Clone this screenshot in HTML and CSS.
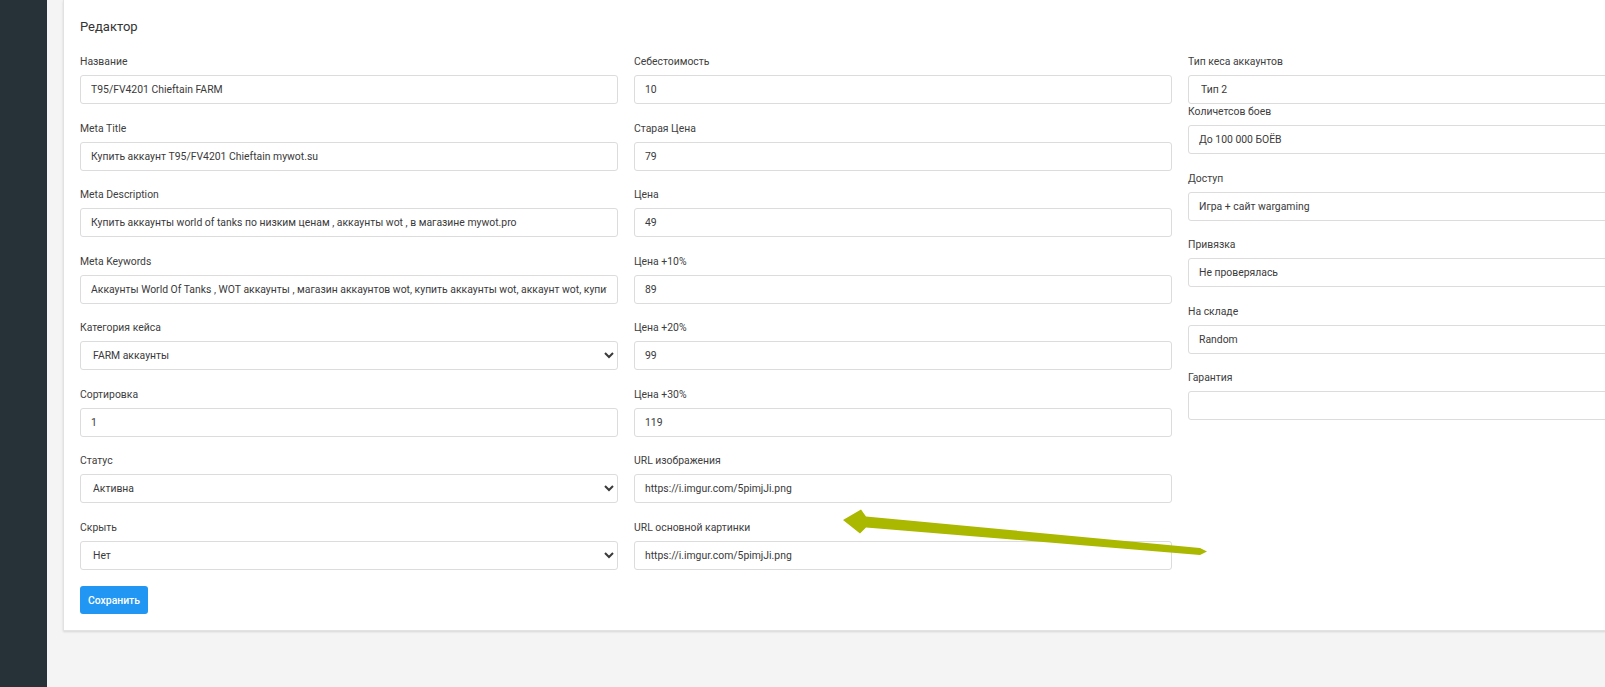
FILE: index.html
```html
<!DOCTYPE html>
<html lang="ru">
<head>
    <meta charset="UTF-8">
    <meta name="viewport" content="width=device-width, initial-scale=1.0">
    <title>Редактор</title>
    <link rel="stylesheet" href="styles.css">
</head>
<body>
    <div class="layout">
        <aside class="sidebar"></aside>

        <main class="content">
            <div class="card">
                <h2>Редактор</h2>

                <form class="editor-form" onsubmit="return false">
                    <div class="form-grid">
                        <div class="form-col">
                            <div class="input-group">
                                <label>Название</label>
                                <input type="text" value="T95/FV4201 Chieftain FARM">
                            </div>
                            <div class="input-group">
                                <label>Meta Title</label>
                                <input type="text" value="Купить аккаунт T95/FV4201 Chieftain mywot.su">
                            </div>
                            <div class="input-group">
                                <label>Meta Description</label>
                                <input type="text" value="Купить аккаунты world of tanks по низким ценам , аккаунты wot , в магазине mywot.pro">
                            </div>
                            <div class="input-group">
                                <label>Meta Keywords</label>
                                <input type="text" value="Аккаунты World Of Tanks , WOT аккаунты , магазин аккаунтов wot, купить аккаунты wot, аккаунт wot, купить аккаунт wot">
                            </div>
                            <div class="input-group">
                                <label>Категория кейса</label>
                                <select>
                                    <option>FARM аккаунты</option>
                                </select>
                            </div>
                            <div class="input-group">
                                <label>Сортировка</label>
                                <input type="text" value="1">
                            </div>
                            <div class="input-group">
                                <label>Статус</label>
                                <select>
                                    <option>Активна</option>
                                </select>
                            </div>
                            <div class="input-group">
                                <label>Скрыть</label>
                                <select>
                                    <option>Нет</option>
                                </select>
                            </div>
                        </div>

                        <div class="form-col">
                            <div class="input-group">
                                <label>Себестоимость</label>
                                <input type="text" value="10">
                            </div>
                            <div class="input-group">
                                <label>Старая Цена</label>
                                <input type="text" value="79">
                            </div>
                            <div class="input-group">
                                <label>Цена</label>
                                <input type="text" value="49">
                            </div>
                            <div class="input-group">
                                <label>Цена +10%</label>
                                <input type="text" value="89">
                            </div>
                            <div class="input-group">
                                <label>Цена +20%</label>
                                <input type="text" value="99">
                            </div>
                            <div class="input-group">
                                <label>Цена +30%</label>
                                <input type="text" value="119">
                            </div>
                            <div class="input-group">
                                <label>URL изображения</label>
                                <input type="text" value="https://i.imgur.com/5pimjJi.png">
                            </div>
                            <div class="input-group">
                                <label>URL основной картинки</label>
                                <input type="text" value="https://i.imgur.com/5pimjJi.png">
                            </div>
                        </div>

                        <div class="form-col">
                            <div class="input-group tight">
                                <label>Тип кеса аккаунтов</label>
                                <select>
                                    <option>Тип 2</option>
                                </select>
                            </div>
                            <div class="input-group">
                                <label>Количетсов боев</label>
                                <input type="text" value="До 100 000 БОЁВ">
                            </div>
                            <div class="input-group">
                                <label>Доступ</label>
                                <input type="text" value="Игра + сайт wargaming">
                            </div>
                            <div class="input-group">
                                <label>Привязка</label>
                                <input type="text" value="Не проверялась">
                            </div>
                            <div class="input-group">
                                <label>На складе</label>
                                <input type="text" value="Random">
                            </div>
                            <div class="input-group">
                                <label>Гарантия</label>
                                <input type="text" value="">
                            </div>
                        </div>
                    </div>

                    <button type="submit" class="save-btn">Сохранить</button>
                </form>
            </div>
        </main>
    </div>

    <!-- annotation arrow drawn over the page -->
    <svg class="annotation" width="1605" height="687" viewBox="0 0 1605 687">
        <polygon points="843,520 861,509.5 866,516.5 1200,548 1207,551.5 1200,555 866,527.5 860,533.5" fill="#abb800"/>
    </svg>
</body>
</html>
```

FILE: styles.css
```css
:root {
    --sidebar-color: #263238;
    --page-bg: #f4f4f4;
    --border-color: #dcdcdc;
    --text-color: #3a3a3a;
    --primary-color: #2196f3;
}

* {
    margin: 0;
    padding: 0;
    box-sizing: border-box;
}

body {
    font-family: Roboto, 'Liberation Sans', Arial, sans-serif;
    font-size: 10.4px;
    color: var(--text-color);
    background: var(--page-bg);
    overflow: hidden;
}

.layout {
    display: flex;
    min-height: 100vh;
}

.sidebar {
    width: 47px;
    flex-shrink: 0;
    background: var(--sidebar-color);
}

.content {
    flex-shrink: 0;
    padding: 0 16px;
}

.card {
    width: 1700px;
    background: white;
    border: 1px solid #e2e2e2;
    border-top: none;
    box-shadow: 0 1px 2px rgba(0, 0, 0, 0.12);
    padding: 19px 16px 16px;
}

h2 {
    font-size: 13px;
    font-weight: 400;
    line-height: 16px;
    color: #333;
    margin-bottom: 19px;
}

.form-grid {
    display: grid;
    grid-template-columns: repeat(3, 538px);
    column-gap: 16px;
}

.input-group {
    margin-bottom: 16.5px;
}

.input-group.tight {
    margin-bottom: 0;
}

label {
    display: block;
    line-height: 16px;
    margin-bottom: 5px;
    color: #404040;
}

input,
select {
    display: block;
    width: 100%;
    height: 29px;
    padding: 0 10px;
    border: 1px solid var(--border-color);
    border-radius: 3px;
    background: white;
    font-family: inherit;
    font-size: 10.4px;
    color: var(--text-color);
}

select {
    padding-left: 8px;
}

input:focus,
select:focus {
    outline: none;
}

.save-btn {
    height: 28px;
    padding: 0 8px;
    border: none;
    border-radius: 3px;
    background: var(--primary-color);
    color: white;
    font-family: inherit;
    font-size: 10.4px;
    font-weight: 500;
    cursor: pointer;
}

.annotation {
    position: absolute;
    top: 0;
    left: 0;
    pointer-events: none;
}
```
